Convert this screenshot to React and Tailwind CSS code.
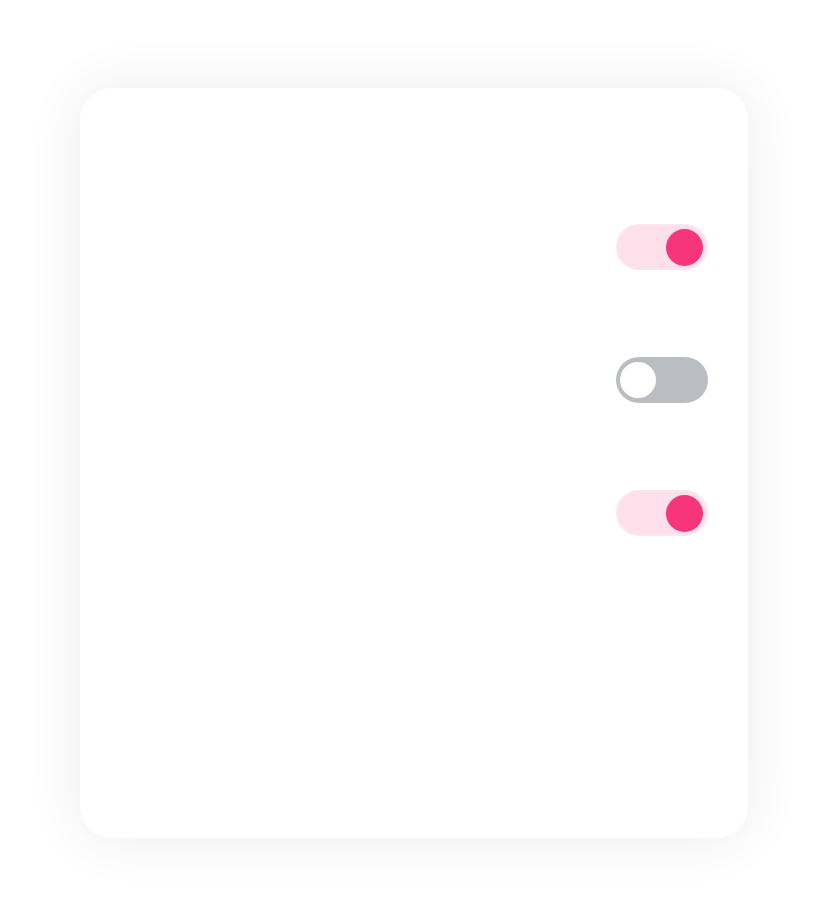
function Toggle({ on }) {
  return on ? (
    <div className="flex h-[46px] w-[92px] items-center justify-end rounded-full border-2 border-[#fce6ee] bg-[#fde0ea] pr-[3px]">
      <div className="h-[37px] w-[37px] rounded-full bg-[#f7357a]" />
    </div>
  ) : (
    <div className="flex h-[46px] w-[92px] items-center justify-start rounded-full bg-[#babdc1] pl-[1px]">
      <div className="h-[42px] w-[42px] rounded-full border-[3px] border-[#babdc1] bg-white" />
    </div>
  );
}

export default function App() {
  const settings = [true, false, true];

  return (
    <div className="min-h-[910px] w-full bg-white pl-[80px] pt-[88px]">
      <div className="flex h-[750px] w-[668px] flex-col gap-[87px] rounded-[32px] bg-white px-10 pt-[136px] shadow-[0_0_56px_rgba(0,0,0,0.08)]">
        {settings.map((on, i) => (
          <div key={i} className="flex justify-end">
            <Toggle on={on} />
          </div>
        ))}
      </div>
    </div>
  );
}
